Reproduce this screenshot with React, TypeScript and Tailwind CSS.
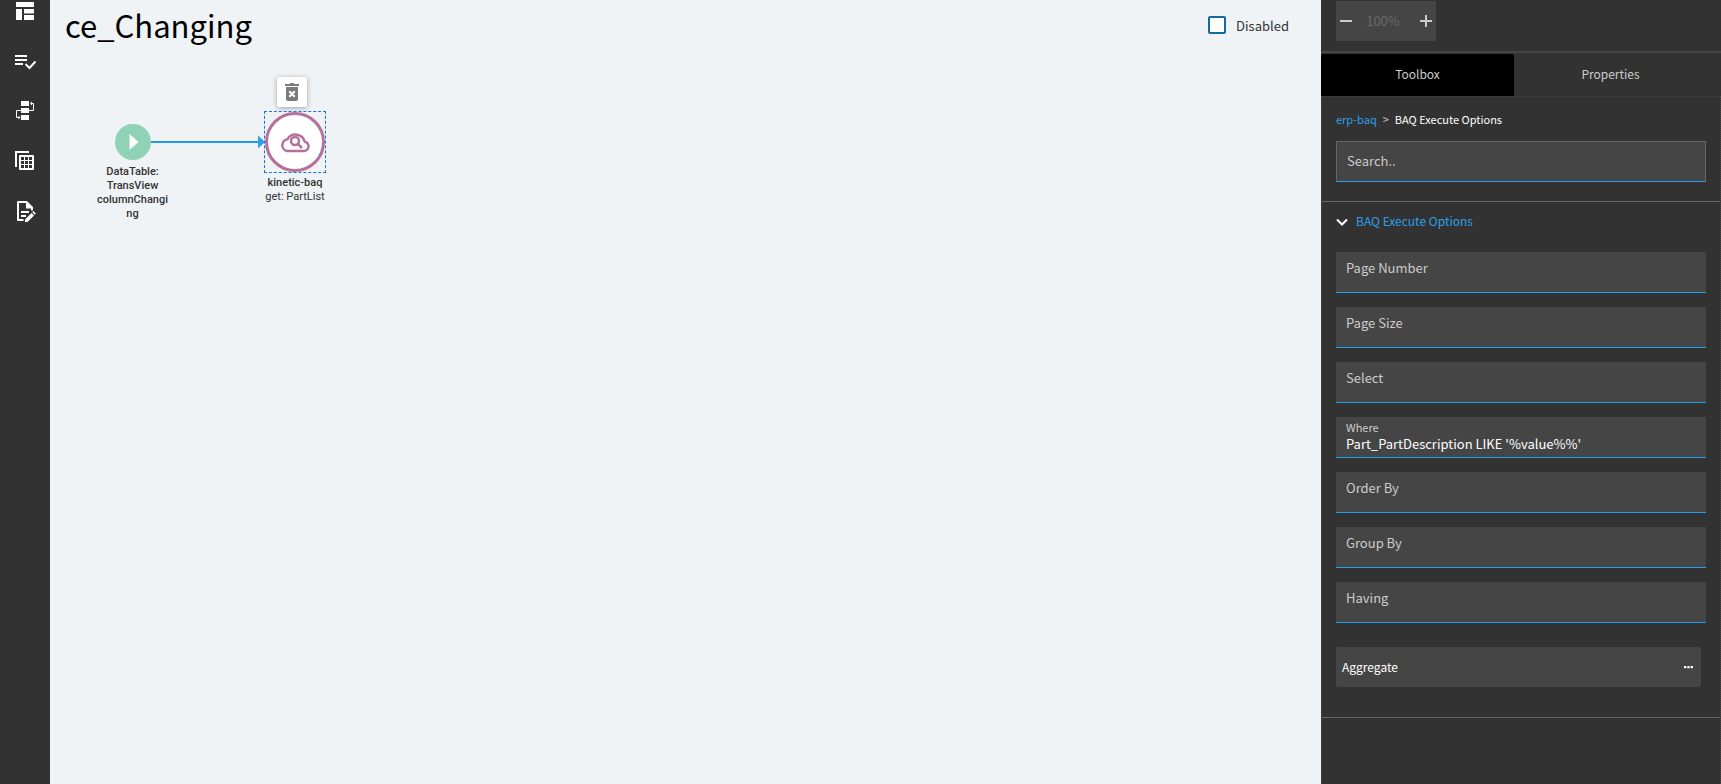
import { useState } from "react";
import type { ReactNode } from "react";

const sideItems: { name: string; icon: ReactNode }[] = [
  {
    name: "Layout",
    icon: <path d="M3 3h18v5H3zM3 10h6v11H3zM11 10h10v4.500H11zM11 16h10v5H11z" />,
  },
  {
    name: "Rules",
    icon: (
      <>
        <path d="M2 6h12v2H2zM2 10h12v2H2zM2 14h8v2H2z" />
        <path d="M12.500 15l4 4L22.500 12.500" fill="none" stroke="currentColor" strokeWidth="2" />
      </>
    ),
  },
  {
    name: "Events",
    icon: (
      <>
        <path d="M8 2h8v5H8zM8 9h8v5H8zM8 16h8v5H8z" />
        <path d="M18 4.500h2.500v7H16M8 11.500H3.500v7H6" fill="none" stroke="currentColor" />
        <path d="M17 4.500l2-2v4zM7.500 18.500l-2-2v4z" />
      </>
    ),
  },
  {
    name: "Data views",
    icon: (
      <>
        <path d="M2 2h14v2H4v14H2z" />
        <path
          fillRule="evenodd"
          d="M7 6h13a1 1 0 0 1 1 1v13a1 1 0 0 1-1 1H7a1 1 0 0 1-1-1V7a1 1 0 0 1 1-1zM8 8v3h3V8zM12 8v3h3V8zM16 8v3h3V8zM8 12v3h3v-3zM12 12v3h3v-3zM16 12v3h3v-3zM8 16v3h3v-3zM12 16v3h3v-3zM16 16v3h3v-3z"
        />
      </>
    ),
  },
  {
    name: "Edit script",
    icon: (
      <>
        <path d="M10.500 21H5V3h8.500l5.500 5.500v3" fill="none" stroke="currentColor" strokeWidth="2" strokeLinejoin="round" />
        <path d="M13 3l6.500 6.500H13zM8 12h8v2H8zM8 16h5v2H8z" />
        <path d="M12 20.500l6.500-6.500 2.500 2.500-6.500 6.500H12zM19.200 13.300l1.200-1.200 2.500 2.500-1.200 1.200z" />
      </>
    ),
  },
];

const fields = [
  { id: "page-number", label: "Page Number", value: "" },
  { id: "page-size", label: "Page Size", value: "" },
  { id: "select", label: "Select", value: "" },
  { id: "where", label: "Where", value: "Part_PartDescription LIKE '%value%%'" },
  { id: "order-by", label: "Order By", value: "" },
  { id: "group-by", label: "Group By", value: "" },
  { id: "having", label: "Having", value: "" },
];

function Sidebar() {
  return (
    <nav className="w-[50px] shrink-0 overflow-hidden bg-[#323232] text-white">
      <div className="-mt-[14px] flex flex-col">
        {sideItems.map((item) => (
          <button key={item.name} aria-label={item.name} className="flex h-[50px] items-center justify-center">
            <svg viewBox="0 0 24 24" className="size-6" fill="currentColor">
              {item.icon}
            </svg>
          </button>
        ))}
      </div>
    </nav>
  );
}

function Flow() {
  return (
    <div className="relative flex-1 font-[Roboto,sans-serif] text-[11px] leading-[14px] font-medium text-[#333]">
      <svg className="absolute top-[84px] left-[101px] h-4 w-[115px]" viewBox="0 0 115 16">
        <path d="M0 8h108" stroke="#2196f3" strokeWidth="2" />
        <path d="M107 1.500l7 6.500-7 6.500z" fill="#29a3ee" />
      </svg>
      <div className="absolute top-[74px] left-[46px] flex w-[73px] flex-col items-center gap-[5px] text-center">
        <svg className="size-9" viewBox="0 0 36 36">
          <circle cx="18" cy="18" r="18" fill="#90d2b5" />
          <path d="M14.500 10v16l9-8z" fill="#fff" />
        </svg>
        <span>
          DataTable:
          <br />
          TransView
          <br />
          columnChangi
          <br />
          ng
        </span>
      </div>
      <button
        aria-label="Delete node"
        className="absolute top-[27px] left-[227px] flex size-[30px] items-center justify-center rounded-xs bg-white shadow-[0_1px_5px_rgba(0,0,0,0.35)]"
      >
        <svg className="size-6" viewBox="0 0 24 24" fill="#7a7a7a">
          <path d="M5 4h4.500l1-1h3l1 1H19v2H5z" />
          <path d="M6 7h12v12a2 2 0 0 1-2 2H8a2 2 0 0 1-2-2z" />
          <path d="M9.200 11.200l5.600 5.600M14.800 11.200l-5.600 5.600" stroke="#fff" strokeWidth="2" />
        </svg>
      </button>
      <div className="absolute top-[61px] left-[205px] flex w-20 flex-col items-center gap-[3px] text-center">
        <div className="size-[62px] border border-dashed border-[#1976d2]">
          <div className="flex size-full items-center justify-center rounded-full border-3 border-[#b5709c] bg-white">
            <svg className="h-6 w-[30px]" viewBox="0 0 30 24" fill="none" stroke="#b5709c" strokeWidth="2.500">
              <path d="M7 21h17a4.700 4.700 0 0 0 .8-9.300A9.500 9.500 0 0 0 7.500 9.200A6 6 0 0 0 7 21z" />
              <circle cx="15" cy="11" r="4" />
              <path d="M17.800 13.800l4.200 4.200" />
            </svg>
          </div>
        </div>
        <span>
          kinetic-baq
          <br />
          <span className="font-normal">get: PartList</span>
        </span>
      </div>
    </div>
  );
}

function Canvas() {
  const [disabled, setDisabled] = useState(false);
  return (
    <main className="flex min-w-0 flex-1 flex-col bg-[#eff3f6]">
      <header className="flex h-[50px] items-center justify-between pr-8 pl-[15px]">
        <h1 className="text-[31px] leading-[50px] text-black">ce_Changing</h1>
        <label className="flex items-center gap-2.5 text-[13px] text-[#333]">
          <input
            type="checkbox"
            checked={disabled}
            onChange={(e) => setDisabled(e.target.checked)}
            className="size-[18px] appearance-none rounded-xs border-2 border-[#0f6ba0] bg-white checked:bg-[#0f6ba0]"
          />
          <span className="pt-0.5">Disabled</span>
        </label>
      </header>
      <Flow />
    </main>
  );
}

function Field({ id, label, value }: { id: string; label: string; value: string }) {
  const [text, setText] = useState(value);
  return (
    <div className="flex h-[41px] flex-col border-b border-[#1fa2ea] bg-[#454545] px-2.5">
      <label
        htmlFor={id}
        className={text ? "pt-0.5 pb-px text-[11px] leading-4 text-[#ccc]" : "pt-1.5 text-[13px] leading-5 text-[#ccc]"}
      >
        {label}
      </label>
      <input
        id={id}
        value={text}
        onChange={(e) => setText(e.target.value)}
        className="h-4 w-full min-w-0 bg-transparent text-[13px] leading-4 text-white outline-none"
      />
    </div>
  );
}

function Panel() {
  return (
    <aside className="flex w-[400px] shrink-0 flex-col bg-[#323232] text-xs text-[#ccc]">
      <div className="mb-px h-[53px] border-b-2 border-[#454545] px-[15px] pt-px">
        <div className="flex h-10 w-[100px] items-center justify-between bg-[#454545] px-1">
          <button aria-label="Zoom out">
            <svg className="size-3" viewBox="0 0 12 12" stroke="#ccc" strokeWidth="2">
              <path d="M0 6h12" />
            </svg>
          </button>
          <span className="pr-1.5 text-[13px] text-[#686868]">100%</span>
          <button aria-label="Zoom in">
            <svg className="size-3" viewBox="0 0 12 12" stroke="#ccc" strokeWidth="2">
              <path d="M0 6h12M6 0v12" />
            </svg>
          </button>
        </div>
      </div>
      <div role="tablist" className="flex h-[42px]">
        <button role="tab" aria-selected="true" className="w-[193px] rounded-t-xs bg-black pb-0.5">
          Toolbox
        </button>
        <button role="tab" aria-selected="false" className="flex-1 pr-3.5 pb-0.5">
          Properties
        </button>
      </div>
      <div className="flex-1 border border-b-0 border-dotted border-[#454545]">
        <div className="flex h-[104px] flex-col px-3.5 pt-[13px]">
          <nav className="flex h-[18px] items-center gap-1.5 text-[11px]">
            <a href="#erp-baq" className="text-[#2ba0e8]">
              erp-baq
            </a>
            <span>&gt;</span>
            <span className="text-white">BAQ Execute Options</span>
          </nav>
          <input
            type="search"
            aria-label="Search"
            placeholder="Search.."
            className="mt-[13px] h-[41px] shrink-0 border border-[#666] border-b-[#2ba0e8] bg-[#454545] px-2.5 pb-0.5 text-[13px] outline-none placeholder:text-[#ccc]"
          />
        </div>
        <section className="border-y border-[#666] px-3.5 pb-[30px]">
          <button className="flex h-[50px] w-full items-start gap-2 pt-2.5 text-[#2ba0e8]">
            <svg className="mt-1 size-3" viewBox="0 0 12 12" fill="none" stroke="#fff" strokeWidth="2">
              <path d="M1 3.500l5 5 5-5" />
            </svg>
            <span className="leading-[18px]">BAQ Execute Options</span>
          </button>
          <div className="flex flex-col gap-3.5">
            {fields.map((f) => (
              <Field key={f.id} {...f} />
            ))}
          </div>
          <button className="mt-6 mr-[5px] flex h-10 w-[calc(100%-5px)] items-center justify-between rounded-xs bg-[#454545] pr-2 pl-1.5 text-white">
            Aggregate
            <svg className="h-2 w-[9px]" viewBox="0 0 9 8" fill="#fff">
              <path d="M0 3h2.300v2.300H0zM3.300 3h2.300v2.300H3.300zM6.600 3H9v2.300H6.600z" />
            </svg>
          </button>
        </section>
      </div>
    </aside>
  );
}

export default function App() {
  return (
    <div className="flex min-h-screen font-['Noto_Sans_CJK_JP','Noto_Sans',sans-serif]">
      <Sidebar />
      <Canvas />
      <Panel />
    </div>
  );
}
